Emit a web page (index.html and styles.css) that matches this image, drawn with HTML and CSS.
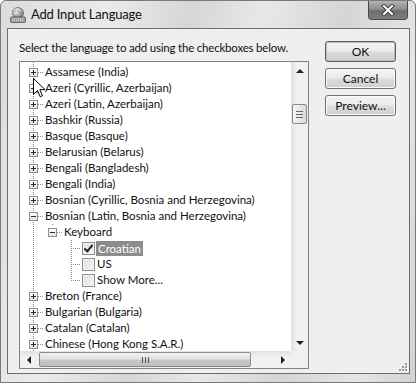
FILE: index.html
```html
<!DOCTYPE html>
<html>
<head>
    <meta charset="UTF-8">
    <title>Add Input Language</title>
    <link rel="stylesheet" href="styles.css">
</head>
<body>
    <div class="window">
        <div class="titlebar">
            <svg class="app-icon" width="18" height="18" viewBox="0 0 18 18">
                <defs>
                    <radialGradient id="globe" cx="0.35" cy="0.3" r="0.8">
                        <stop offset="0" stop-color="#ffffff"/>
                        <stop offset="0.5" stop-color="#b4b4b4"/>
                        <stop offset="1" stop-color="#5a5a5a"/>
                    </radialGradient>
                </defs>
                <circle cx="9" cy="7" r="5.5" fill="url(#globe)" stroke="#6a6a6a" stroke-width="0.8"/>
                <path d="M5 5.5 Q8 4 10 6 Q12 8 13 6" fill="none" stroke="#8a8a8a" stroke-width="0.8"/>
                <rect x="1.5" y="11" width="15" height="5.5" rx="1" fill="#9a9a9a" stroke="#555" stroke-width="0.8"/>
                <path d="M3 12.7h12M3 14.6h12" stroke="#e6e6e6" stroke-width="0.9" stroke-dasharray="1.2 0.8"/>
            </svg>
            <span class="title">Add Input Language</span>
            <div class="close-btn">
                <svg width="16" height="12" viewBox="0 0 16 12">
                    <path d="M4 2 L12 10 M12 2 L4 10" stroke="#3c3c3c" stroke-width="4" stroke-linecap="square"/>
                    <path d="M4 2 L12 10 M12 2 L4 10" stroke="#ffffff" stroke-width="2" stroke-linecap="square"/>
                </svg>
            </div>
        </div>

        <div class="client">
            <div class="main">
                <p class="hint">Select the language to add using the checkboxes below.</p>
                <div class="tree">
                    <div class="tree-rows">
                        <div class="node"><span class="exp plus"></span><span class="label">Assamese (India)</span></div>
                        <div class="node"><span class="exp plus"></span><span class="label">Azeri (Cyrillic, Azerbaijan)</span></div>
                        <div class="node"><span class="exp plus"></span><span class="label">Azeri (Latin, Azerbaijan)</span></div>
                        <div class="node"><span class="exp plus"></span><span class="label">Bashkir (Russia)</span></div>
                        <div class="node"><span class="exp plus"></span><span class="label">Basque (Basque)</span></div>
                        <div class="node"><span class="exp plus"></span><span class="label">Belarusian (Belarus)</span></div>
                        <div class="node"><span class="exp plus"></span><span class="label">Bengali (Bangladesh)</span></div>
                        <div class="node"><span class="exp plus"></span><span class="label">Bengali (India)</span></div>
                        <div class="node"><span class="exp plus"></span><span class="label">Bosnian (Cyrillic, Bosnia and Herzegovina)</span></div>
                        <div class="node"><span class="exp minus"></span><span class="label">Bosnian (Latin, Bosnia and Herzegovina)</span></div>
                        <div class="node"><span class="indent"></span><span class="exp minus child"></span><span class="label">Keyboard</span></div>
                        <div class="node"><span class="indent"></span><span class="indent"></span><span class="branch"></span><span class="check checked"></span><span class="label selected">Croatian</span></div>
                        <div class="node"><span class="indent"></span><span class="indent"></span><span class="branch"></span><span class="check"></span><span class="label">US</span></div>
                        <div class="node"><span class="indent"></span><span class="indent"></span><span class="branch last"></span><span class="check"></span><span class="label">Show More...</span></div>
                        <div class="node"><span class="exp plus"></span><span class="label">Breton (France)</span></div>
                        <div class="node"><span class="exp plus"></span><span class="label">Bulgarian (Bulgaria)</span></div>
                        <div class="node"><span class="exp plus"></span><span class="label">Catalan (Catalan)</span></div>
                        <div class="node"><span class="exp plus"></span><span class="label">Chinese (Hong Kong S.A.R.)</span></div>
                    </div>
                    <div class="vscroll">
                        <div class="sb-btn"><span class="arrow up"></span></div>
                        <div class="vtrack"><div class="vthumb"></div></div>
                        <div class="sb-btn"><span class="arrow down"></span></div>
                    </div>
                    <div class="hscroll">
                        <div class="sb-btn"><span class="arrow left"></span></div>
                        <div class="htrack"><div class="hthumb"></div></div>
                        <div class="sb-btn"><span class="arrow right"></span></div>
                    </div>
                    <div class="corner"></div>
                </div>
            </div>
            <div class="actions">
                <button class="btn default">OK</button>
                <button class="btn">Cancel</button>
                <button class="btn">Preview...</button>
            </div>
            <svg class="grip" width="10" height="10" viewBox="0 0 10 10">
                <g fill="#9a9a9a">
                    <rect x="7" y="1" width="2" height="2"/>
                    <rect x="4" y="4" width="2" height="2"/>
                    <rect x="7" y="4" width="2" height="2"/>
                    <rect x="1" y="7" width="2" height="2"/>
                    <rect x="4" y="7" width="2" height="2"/>
                    <rect x="7" y="7" width="2" height="2"/>
                </g>
            </svg>
        </div>

        <svg class="cursor" width="13" height="21" viewBox="0 0 13 21">
            <path d="M0.5 0.5 L0.5 16.5 L4.5 12.5 L7.2 18.8 L9.4 17.8 L6.8 11.6 L12 11.6 Z" fill="#fff" stroke="#000" stroke-width="1"/>
        </svg>
    </div>
</body>
</html>
```

FILE: styles.css
```css
html, body {
    margin: 0;
    padding: 0;
}

body {
    width: 416px;
    height: 383px;
    overflow: hidden;
    font-family: Lato, "Noto Sans", sans-serif;
    font-size: 11.5px;
    color: #111;
    background-color: #fff;
}

.window {
    position: relative;
    width: 416px;
    height: 383px;
    box-sizing: border-box;
    border: 1px solid #7a7a7a;
    border-radius: 6px 6px 0 0;
    background: linear-gradient(100deg, #dcdcdc 0%, #ebebeb 22%, #d6d6d6 40%, #e8e8e8 55%, #d5d5d5 72%, #e5e5e5 88%, #d2d2d2 100%);
    display: flex;
    flex-direction: column;
}

/* title bar */

.titlebar {
    height: 27px;
    display: flex;
    align-items: flex-start;
    padding-left: 8px;
}

.app-icon {
    margin-top: 5px;
}

.title {
    margin-left: 4px;
    margin-top: 5px;
    font-size: 13px;
    letter-spacing: -0.2px;
    color: #111;
}

.close-btn {
    margin-left: auto;
    margin-right: 7px;
    width: 40px;
    height: 19px;
    box-sizing: border-box;
    border: 1px solid #4a4a4a;
    border-top: none;
    border-radius: 0 0 4px 4px;
    background: linear-gradient(#b4b4b4 0%, #8e8e8e 45%, #6c6c6c 55%, #7e7e7e 100%);
    display: flex;
    align-items: center;
    justify-content: center;
}

/* client area */

.client {
    position: relative;
    flex: 1;
    margin: 0 5px 8px 6px;
    border: 1px solid #6e6e6e;
    background-color: #efefef;
    display: flex;
    padding: 11px 13px 0 11px;
}

.main {
    width: 290px;
}

.hint {
    margin: 0 0 6px 0;
    line-height: 15px;
    letter-spacing: -0.2px;
    white-space: nowrap;
}

.tree {
    width: 290px;
    height: 308px;
    box-sizing: border-box;
    border: 1px solid #828282;
    background-color: #fff;
    display: grid;
    grid-template-columns: 271px 17px;
    grid-template-rows: 289px 17px;
}

.tree-rows {
    overflow: hidden;
    padding: 2px 0 0 4px;
    background-image: linear-gradient(to bottom, #8a8a8a 50%, transparent 50%);
    background-size: 1px 2px;
    background-repeat: repeat-y;
    background-position: 13px 0;
}

.node {
    height: 16px;
    display: flex;
    align-items: center;
    white-space: nowrap;
}

.indent {
    width: 19px;
    height: 16px;
    flex: none;
}

.exp {
    position: relative;
    width: 19px;
    height: 16px;
    flex: none;
    box-sizing: border-box;
    padding-left: 14px;
    background-image: linear-gradient(to right, #8a8a8a 50%, transparent 50%);
    background-size: 2px 1px;
    background-repeat: repeat-x;
    background-position: 0 8px;
    background-clip: content-box;
}

.exp.child {
    background-image:
        linear-gradient(to right, #8a8a8a 50%, transparent 50%),
        linear-gradient(to bottom, #8a8a8a 50%, transparent 50%);
    background-size: 2px 1px, 1px 2px;
    background-repeat: repeat-x, no-repeat;
    background-position: 0 8px, 9px 0;
    background-clip: content-box, border-box;
}

.exp::before {
    content: "";
    position: absolute;
    left: 5px;
    top: 4px;
    width: 7px;
    height: 7px;
    border: 1px solid #8f8f8f;
    background: linear-gradient(#ffffff, #e2e2e2);
}

.exp::after {
    content: "";
    position: absolute;
    left: 7px;
    top: 6px;
    width: 5px;
    height: 5px;
    background: linear-gradient(#2a2a2a, #2a2a2a) center / 5px 1px no-repeat;
}

.exp.plus::after {
    background:
        linear-gradient(#2a2a2a, #2a2a2a) center / 5px 1px no-repeat,
        linear-gradient(#2a2a2a, #2a2a2a) center / 1px 5px no-repeat;
}

.branch {
    position: relative;
    width: 19px;
    height: 16px;
    flex: none;
}

.branch::before {
    content: "";
    position: absolute;
    left: 9px;
    top: 0;
    width: 1px;
    height: 16px;
    background: linear-gradient(to bottom, #8a8a8a 50%, transparent 50%) 0 0 / 1px 2px repeat-y;
}

.branch.last::before {
    height: 9px;
}

.branch::after {
    content: "";
    position: absolute;
    left: 10px;
    top: 8px;
    width: 9px;
    height: 1px;
    background: linear-gradient(to right, transparent 50%, #8a8a8a 50%) 0 0 / 2px 1px repeat-x;
}

.check {
    width: 11px;
    height: 11px;
    flex: none;
    margin-left: 1px;
    border: 1px solid #8e8e8e;
    background: linear-gradient(135deg, #dcdcdc, #f6f6f6);
    box-shadow: inset 0 0 0 1px #f4f4f4;
    position: relative;
}

.check.checked::after {
    content: "";
    position: absolute;
    left: 3px;
    top: 0;
    width: 3px;
    height: 7px;
    border: solid #222;
    border-width: 0 2px 2px 0;
    transform: rotate(40deg);
}

.label {
    line-height: 16px;
    padding: 0 2px;
}

.label.selected {
    background-color: #8c8c8c;
    color: #fff;
    line-height: 15px;
    margin-left: 1px;
}

/* scrollbars */

.vscroll {
    display: flex;
    flex-direction: column;
    background: linear-gradient(to right, #e2e2e2, #f2f2f2 40%, #f0f0f0);
}

.hscroll {
    display: flex;
    background: linear-gradient(#e2e2e2, #f2f2f2 40%, #f0f0f0);
}

.corner {
    background-color: #f0f0f0;
}

.sb-btn {
    width: 17px;
    height: 17px;
    flex: none;
    display: flex;
    align-items: center;
    justify-content: center;
}

.arrow {
    width: 0;
    height: 0;
    border: 4px solid transparent;
}

.arrow.up {
    border-top: none;
    border-bottom: 4px solid #222;
}

.arrow.down {
    border-bottom: none;
    border-top: 4px solid #222;
}

.arrow.left {
    border-left: none;
    border-right: 4px solid #222;
}

.arrow.right {
    border-right: none;
    border-left: 4px solid #222;
}

.vtrack {
    flex: 1;
    padding-top: 25px;
}

.vthumb {
    width: 13px;
    height: 18px;
    margin-left: 1px;
    border: 1px solid #8a8a8a;
    border-radius: 2px;
    background:
        linear-gradient(#6a6a6a, #6a6a6a) center 6px / 7px 1px no-repeat,
        linear-gradient(#6a6a6a, #6a6a6a) center 9px / 7px 1px no-repeat,
        linear-gradient(#6a6a6a, #6a6a6a) center 12px / 7px 1px no-repeat,
        linear-gradient(to right, #f4f4f4, #dadada);
}

.htrack {
    flex: 1;
    padding: 1px 0 0 2px;
}

.hthumb {
    width: 210px;
    height: 13px;
    border: 1px solid #8a8a8a;
    border-radius: 2px;
    background:
        linear-gradient(#555, #555) 102px center / 1px 6px no-repeat,
        linear-gradient(#555, #555) 105px center / 1px 6px no-repeat,
        linear-gradient(#555, #555) 108px center / 1px 6px no-repeat,
        linear-gradient(#f2f2f2 0%, #e2e2e2 45%, #c9c9c9 55%, #bdbdbd 100%);
}

/* buttons */

.actions {
    margin-left: 16px;
    display: flex;
    flex-direction: column;
    gap: 6px;
    padding-top: 1px;
}

.btn {
    width: 71px;
    height: 21px;
    padding: 0;
    border: 1px solid #707070;
    border-radius: 3px;
    font-family: Lato, "Noto Sans", sans-serif;
    font-size: 12px;
    color: #111;
    background: linear-gradient(#f4f4f4 0%, #ebebeb 48%, #dcdcdc 52%, #cfcfcf 100%);
    box-shadow: inset 0 0 0 1px #fbfbfb;
}

.btn.default {
    border-color: #5c5c5c;
    box-shadow: inset 0 0 0 1px #bdbdbd;
}

.grip {
    position: absolute;
    right: 1px;
    bottom: 1px;
}

.cursor {
    position: absolute;
    left: 32px;
    top: 77px;
}
```
